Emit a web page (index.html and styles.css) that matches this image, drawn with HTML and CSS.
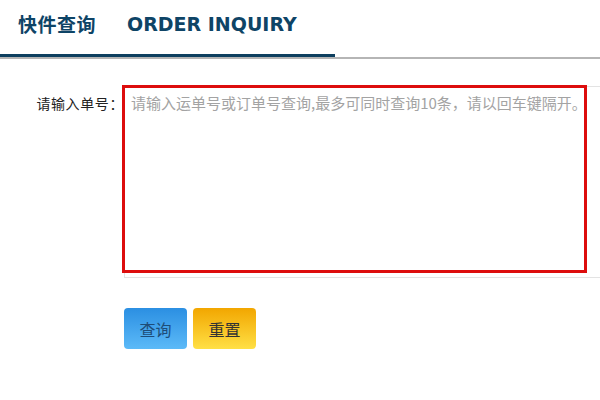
FILE: index.html
```html
<!DOCTYPE html>
<html lang="zh">
<head>
<meta charset="utf-8">
<link rel="stylesheet" href="styles.css">
</head>
<body>
<div class="page">
  <div class="tabs">
    <div class="tab-active">
      <span class="title-cn">快件查询</span>
      <span class="title-en">ORDER INQUIRY</span>
    </div>
  </div>
  <div class="form-row">
    <label class="label">请输入单号：</label>
    <div class="field">
      <textarea class="input" placeholder="请输入运单号或订单号查询,最多可同时查询10条，请以回车键隔开。"></textarea>
      <div class="highlight"></div>
    </div>
  </div>
  <div class="actions">
    <button class="btn btn-query">查询</button>
    <button class="btn btn-reset">重置</button>
  </div>
</div>
</body>
</html>
```
FILE: styles.css
```css
html, body {
  margin: 0;
  padding: 0;
  background: #fff;
  overflow: hidden;
}
body {
  font-family: "Noto Sans CJK SC", "Liberation Sans", sans-serif;
  width: 600px;
  height: 400px;
}
.page {
  width: 600px;
  overflow: hidden;
}
.tabs {
  height: 57px;
  border-bottom: 2px solid #b5b5b5;
  display: flex;
}
.tab-active {
  width: 335px;
  height: 57px;
  border-bottom: 3px solid #0d3f5f;
  margin-bottom: -2px;
  box-sizing: border-box;
  display: flex;
  align-items: flex-start;
  padding: 9px 0 0 18px;
  color: #0e4466;
}
.title-cn {
  font-size: 19px;
  font-weight: 700;
  line-height: 30px;
  letter-spacing: 0.5px;
}
.title-en {
  margin-left: 31px;
  font-family: "DejaVu Sans", sans-serif;
  font-size: 19px;
  font-weight: 700;
  line-height: 30px;
}
.form-row {
  display: flex;
  margin-top: 27px;
  height: 193px;
}
.label {
  flex: none;
  width: 124px;
  box-sizing: border-box;
  text-align: right;
  padding-top: 7px;
  font-size: 14px;
  line-height: 20px;
  letter-spacing: 0.6px;
  color: #222;
  white-space: nowrap;
}
.field {
  flex: none;
  position: relative;
  width: 520px;
}
.input {
  display: block;
  width: 520px;
  height: 192px;
  box-sizing: border-box;
  border: 1px solid #e3e3e3;
  padding: 6px 6px;
  font-family: "Noto Sans CJK SC", sans-serif;
  font-size: 15px;
  line-height: 20px;
  resize: none;
  outline: none;
  margin: 0;
}
.input::placeholder {
  color: #a3a3a3;
}
.highlight {
  position: absolute;
  left: -2px;
  top: -1px;
  width: 465px;
  height: 188px;
  box-sizing: border-box;
  border: 3px solid #dd0d0d;
  pointer-events: none;
}
.actions {
  display: flex;
  gap: 6px;
  margin-top: 29px;
  padding-left: 124px;
}
.btn {
  width: 63px;
  height: 41px;
  border: none;
  border-radius: 4px;
  font-family: "Noto Sans CJK SC", sans-serif;
  font-size: 16px;
  padding: 0;
}
.btn-query {
  background: linear-gradient(#2b8fe2, #5cbaf8);
  color: #1e4d78;
}
.btn-reset {
  background: linear-gradient(#f2a600, #ffe045);
  color: #333;
}
```
